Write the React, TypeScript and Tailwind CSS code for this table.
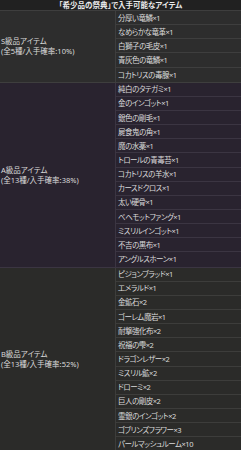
import React from 'react';

type Section = {
  title: string;
  note: string;
  bg: string;
  line: string;
  items: string[];
};

const SECTIONS: Section[] = [
  {
    title: 'S級品アイテム',
    note: '(全5種/入手確率:10%)',
    bg: 'bg-[#2d2d2d]',
    line: 'border-[#3e3e3e]',
    items: ['分厚い竜鱗×1', 'なめらかな竜革×1', '白獅子の毛皮×1', '青灰色の竜鱗×1', 'コカトリスの毒腺×1'],
  },
  {
    title: 'A級品アイテム',
    note: '(全13種/入手確率:38%)',
    bg: 'bg-[#29232f]',
    line: 'border-[#3b3542]',
    items: [
      '純白のタテガミ×1', '金のインゴット×1', '銀色の剛毛×1', '屍食鬼の角×1', '魔の水薬×1',
      'トロールの青毒苔×1', 'コカトリスの羊水×1', 'カースドクロス×1', '太い硬骨×1',
      'ベヘモットファング×1', 'ミスリルインゴット×1', '不吉の黒布×1', 'アングルスホーン×1',
    ],
  },
  {
    title: 'B級品アイテム',
    note: '(全13種/入手確率:52%)',
    bg: 'bg-[#2b2b29]',
    line: 'border-[#3d3d3b]',
    items: [
      'ピジョンブラッド×1', 'エメラルド×1', '金鉱石×2', 'ゴーレム魔岩×1', '耐撃強化布×2',
      '祝福の雫×2', 'ドラゴンレザー×2', 'ミスリル鉱×2', 'ドローミ×2', '巨人の剛皮×2',
      '霊銀のインゴット×2', 'ゴブリンズフラワー×3', 'パールマッシュルーム×10',
    ],
  },
];

export default function App() {
  return (
    <div className="w-[241px] h-[450px] overflow-hidden bg-[#2d2d2d] text-[7.5px] leading-[10px] text-[#dadada] font-['Noto_Sans','Noto_Sans_CJK_JP',sans-serif] [font-feature-settings:'palt']">
      {/* Header */}
      <div className="h-[11px] flex items-center justify-center bg-[#212121] border-b border-[#3e3e3e] text-[#ececec] font-bold">
        「希少品の祭典」で入手可能なアイテム
      </div>

      {SECTIONS.map(sec => (
        <div key={sec.title} className={`flex border-b ${sec.bg} ${sec.line}`}>
          <div className={`w-[116px] shrink-0 flex flex-col justify-center pl-[1px] border-r ${sec.line}`}>
            <span>{sec.title}</span>
            <span>{sec.note}</span>
          </div>
          <div className="flex-1 flex flex-col tracking-[-0.5px]">
            {sec.items.map((item, i) => (
              <div key={item}
                className={`h-[14.15px] flex items-center pl-[2px] ${i < sec.items.length - 1 ? `border-b ${sec.line}` : ''}`}>
                {item}
              </div>
            ))}
          </div>
        </div>
      ))}
    </div>
  );
}
